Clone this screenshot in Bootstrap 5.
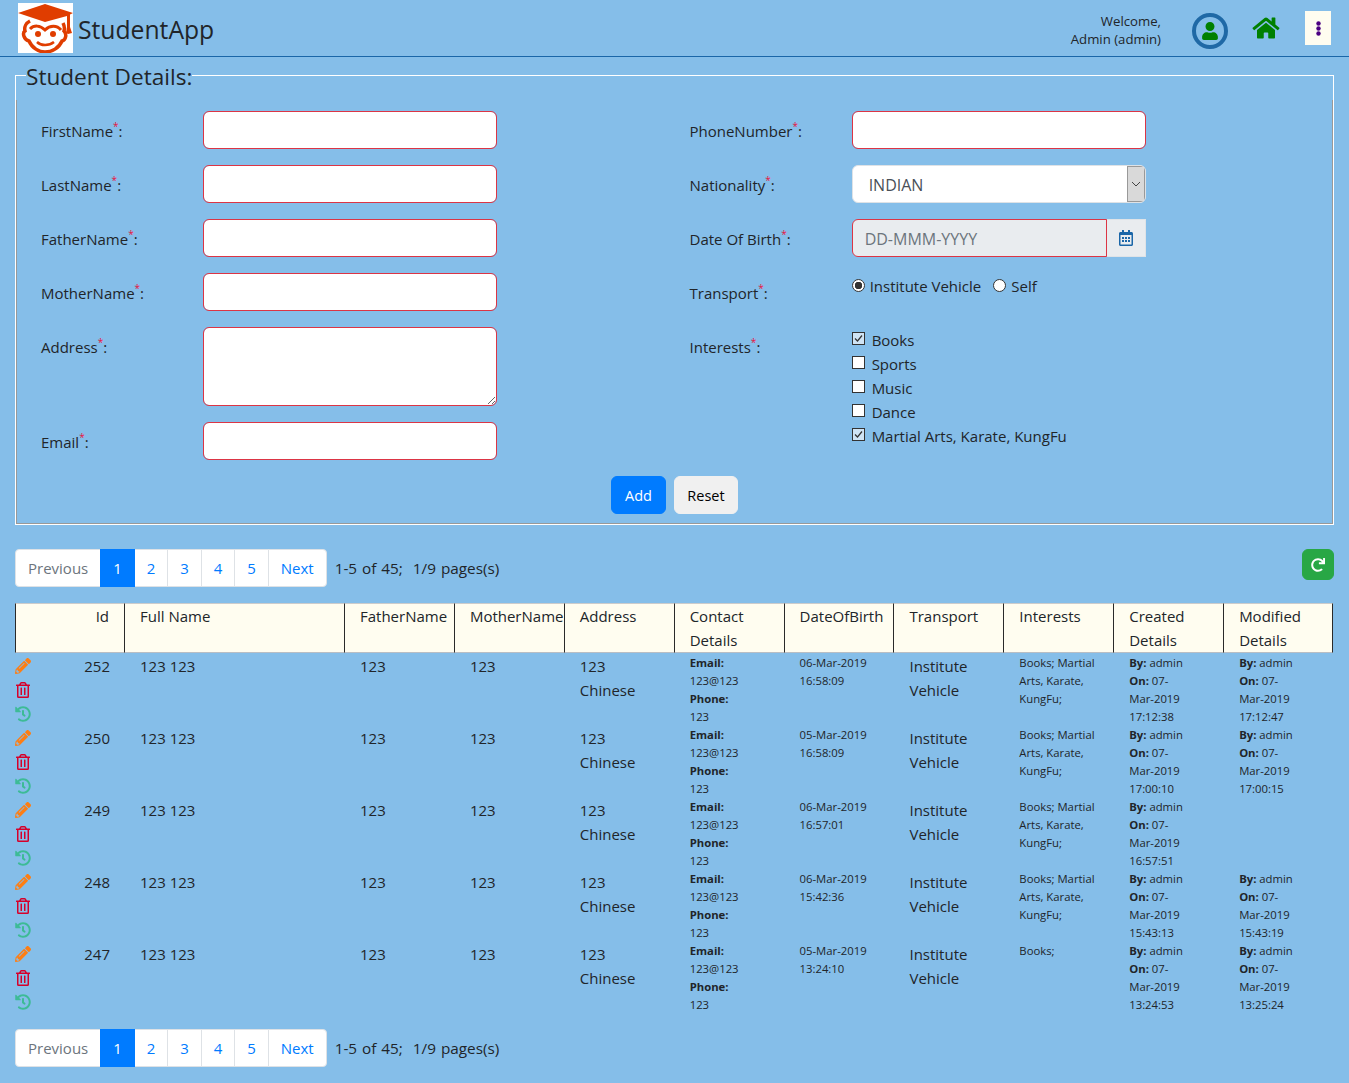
<!DOCTYPE html>
<html lang="en">
<head>
  <meta charset="UTF-8" />
  <meta name="viewport" content="width=device-width, initial-scale=1.0"/>
  <title>StudentApp</title>
  <link href="https://cdn.jsdelivr.net/npm/bootstrap@5.3.3/dist/css/bootstrap.min.css" rel="stylesheet">
  <style>
    :root { --bs-border-radius: .25rem; }
    body {
      font-family: "Open Sans", "Noto Sans", sans-serif;
      font-size: 15px;
      line-height: 24px;
      background: #85bee9;
      color: #212529;
    }
    .top-bar { height: 57px; border-bottom: 1px solid #1a66a8; padding: 3px 18px; }
    .logo-box { width: 55px; height: 50px; background: #fff; display: block; }
    .app-name { font-size: 24.7px; margin: 4px 0 0 5px; }
    .welcome { font-size: 13.2px; line-height: 18px; text-align: right; margin: 4px 31px 0 0; }
    .user-ico { width: 36px; height: 36px; border: 4px solid #1f69a6; border-radius: 50%; margin: 5px 24px 0 0; }
    .home-ico { margin-right: 25px; }
    .dots-btn { width: 26px; height: 34px; background: #fffdf0; }
    .panel-set { margin: 2px 15px 0; border: 1px solid #fff; padding: 0; min-width: 0; }
    .panel-set legend { float: none; width: auto; font-size: 22.6px; line-height: 28px; margin: -15px 0 0 10px; padding: 4px 0 0; }
    .panel-body { margin-top: 9px; padding: 11px 9px 9px; border: 1px solid #999; border-top: 0; }
    .form-cols > div { padding: 0 15px; }
    .line-row { --bs-gutter-x: 30px; margin-left: -15px; margin-right: -15px; margin-bottom: 16px; }
    .line-row > label { padding-top: 8px; }
    .line-row > div { min-height: 38px; }
    .pick-col { padding-top: 1px; }
    .req { color: #e8113c; font-size: 10px; vertical-align: 7px; line-height: 0; }
    .bad-input { height: 38px; border-color: #dc3545; }
    textarea.bad-input { height: 79px; }
    .nation-select {
      height: 38px; padding: 7px 24px 7px 16px; color: #495057;
      background-image: url("data:image/svg+xml,%3Csvg xmlns='http://www.w3.org/2000/svg' width='18' height='36'%3E%3Crect x='.5' y='.5' width='17' height='35' fill='%23d9d9d9' stroke='%23999'/%3E%3Cpath d='M5 16l4 4 4-4' fill='none' stroke='%23444'/%3E%3C/svg%3E");
      background-position: right center;
      background-size: 18px 36px;
      background-repeat: no-repeat;
    }
    .date-wrap .form-control { height: 38px; background: #e9ecef; border-color: #dc3545; padding: 8px 12px 6px; }
    .date-wrap .form-control::placeholder { color: #6c757d; }
    .date-wrap .input-group-text { width: 39px; margin-left: 0 !important; justify-content: center; padding: 0; background: #e9ecef; border-color: #dfe3e7; border-left: 0; border-radius: 0; }
    .pick-row { display: flex; align-items: center; height: 24px; }
    .pick-row input { appearance: none; width: 13px; height: 13px; margin: 0 5px 0 0; background: #fff no-repeat center; border: 1px solid #333; flex: none; position: relative; top: -1px; }
    .pick-row input[type=radio] { border-radius: 50%; }
    .pick-row input[type=radio]:checked { background-image: radial-gradient(circle, #333 0 3.5px, transparent 4px); }
    .pick-row input[type=checkbox] { margin-right: 7px; top: -2px; }
    .pick-row input[type=checkbox]:checked {
      background-color: #cfe4f5;
      background-image: url("data:image/svg+xml,%3Csvg xmlns='http://www.w3.org/2000/svg' width='11' height='11'%3E%3Cpath d='M2 5.5l2.5 2.5L9 2.5' fill='none' stroke='%23333' stroke-width='1.2'/%3E%3C/svg%3E");
    }
    .radio-pair { column-gap: 12px; }
    .btn-add, .btn-clear { height: 38px; padding: 1px 0 0; font-size: 14.5px; }
    .btn-add { width: 55px; background: #007bff; border-color: #007bff; }
    .btn-clear { width: 64px; background: #f0f0f0; border-color: #f0f0f0; }
    .pager-top { margin: 24px 15px 16px; height: 38px; }
    .pager-end { margin: 16px 15px 0; height: 38px; }
    .pagination { --bs-pagination-padding-x: 12px; --bs-pagination-padding-y: 6px; --bs-pagination-font-size: 15px; --bs-pagination-color: #007bff; --bs-pagination-active-bg: #007bff; --bs-pagination-active-border-color: #007bff; --bs-pagination-disabled-color: #6c757d; --bs-pagination-disabled-bg: #fff; }
    .page-num .page-link { width: 34.5px; padding-left: 0; padding-right: 0; text-align: center; }
    .pager-info { margin-left: 8px; white-space: pre; font-size: 15.3px; word-spacing: 1px; }
    .btn-refresh { width: 32px; height: 31px; padding: 0; background: #28a745; border-color: #28a745; display: flex; align-items: center; justify-content: center; }
    .grid-wrap { padding: 0 15px; }
    .student-grid { table-layout: fixed; width: 1318.1px; border-collapse: separate; border-spacing: 0; }
    .student-grid th { width: 109.9px; height: 50px; vertical-align: top; background: #fffdf0; font-weight: 400; padding: 0 15px; border-top: 1px solid #ccc; border-bottom: 1px solid #b9bec4; border-left: 1px solid #2a2a2a; }
    .student-grid th:nth-child(1) { width: 109px; }
    .student-grid th:nth-child(2) { width: 220px; }
    .student-grid th:last-child { border-right: 1px solid #2a2a2a; }
    .student-grid td { height: 72px; vertical-align: top; padding: 0 15px 0 16px; }
    .student-grid td.ico-cell { padding: 0 14px 0 0; }
    .cell-txt { margin: 1px 0 -1px; }
    .ico-stack > div { display: flex; height: 24px; align-items: center; }
    .small-txt { font-size: 11.3px; line-height: 18px; }
    .small-txt b { font-weight: 700; }
    .ico-pen { width: 16px; height: 16px; fill: #fd7e14; }
    .ico-bin { width: 14px; height: 16px; fill: #d6002a; margin-left: 1px; }
    .ico-his { width: 16px; height: 16px; fill: #3dbb96; }
  </style>
</head>
<body>

<!-- Header -->
<div class="top-bar d-flex align-items-center">
  <svg class="logo-box" viewBox="0 0 55 50" aria-label="Logo">
    <path d="M27 1 L55 10 L52 11.5 L52 24 L54 30 L50 31 L48 30 L49 24 L49 13 L27 19 L0 10 Z" fill="#e03d00"/>
    <path d="M12 18 C8 20 6 24 7 28 C4 30 6 37 11 38 C14 45 21 49 27 49 C34 49 41 45 44 38 C48 37 49 31 46 28 C47 25 46 22 45 20" fill="none" stroke="#e03d00" stroke-width="3.5"/>
    <path d="M12 26 C16 22 22 22 27 27 C32 22 39 22 43 27" fill="none" stroke="#e03d00" stroke-width="3"/>
    <circle cx="20" cy="31" r="3" fill="#e03d00"/><circle cx="35" cy="31" r="3" fill="#e03d00"/>
    <path d="M19 39 C23 43 31 43 36 39" fill="none" stroke="#e03d00" stroke-width="2.5"/>
  </svg>
  <span class="app-name">StudentApp</span>
  <div class="ms-auto welcome">Welcome,<br>Admin (admin)</div>
  <div class="user-ico d-flex align-items-center justify-content-center">
    <svg width="16" height="18" viewBox="0 0 448 512" fill="#008000"><path d="M224 256c70.7 0 128-57.3 128-128S294.7 0 224 0 96 57.3 96 128s57.3 128 128 128zm89.6 32h-16.7c-22.2 10.2-46.9 16-72.9 16s-50.6-5.8-72.9-16h-16.7C60.2 288 0 348.2 0 422.4V464c0 26.5 21.5 48 48 48h352c26.5 0 48-21.5 48-48v-41.6c0-74.2-60.2-134.4-134.4-134.4z"/></svg>
  </div>
  <svg class="home-ico" width="28" height="24" viewBox="0 0 576 512" fill="#008000"><path d="M280.37 148.26L96 300.11V464a16 16 0 0 0 16 16l112.06-.29a16 16 0 0 0 15.92-16V368a16 16 0 0 1 16-16h64a16 16 0 0 1 16 16v95.64a16 16 0 0 0 16 16.05L464 480a16 16 0 0 0 16-16V300L295.67 148.26a12.19 12.19 0 0 0-15.3 0zM571.6 251.47L488 182.56V44.05a12 12 0 0 0-12-12h-56a12 12 0 0 0-12 12v72.61L318.47 43a48 48 0 0 0-61 0L4.34 251.47a12 12 0 0 0-1.6 16.9l25.5 31A12 12 0 0 0 45.15 301l235.22-193.74a12.19 12.19 0 0 1 15.3 0L530.9 301a12 12 0 0 0 16.9-1.6l25.5-31a12 12 0 0 0-1.7-16.93z"/></svg>
  <div class="dots-btn d-flex align-items-center justify-content-center">
    <svg width="5" height="15" viewBox="0 0 5 15" fill="#4b0082"><circle cx="2.5" cy="2.5" r="2.2"/><circle cx="2.5" cy="7.5" r="2.2"/><circle cx="2.5" cy="12.5" r="2.2"/></svg>
  </div>
</div>

<!-- Form -->
<fieldset class="panel-set">
  <legend>Student Details:</legend>
  <div class="panel-body">
    <div class="row g-0 form-cols">
      <div class="col-6">
        <div class="row line-row"><label class="col-3">FirstName<span class="req">*</span>:</label><div class="col-6"><input class="form-control bad-input" type="text"></div></div>
        <div class="row line-row"><label class="col-3">LastName<span class="req">*</span>:</label><div class="col-6"><input class="form-control bad-input" type="text"></div></div>
        <div class="row line-row"><label class="col-3">FatherName<span class="req">*</span>:</label><div class="col-6"><input class="form-control bad-input" type="text"></div></div>
        <div class="row line-row"><label class="col-3">MotherName<span class="req">*</span>:</label><div class="col-6"><input class="form-control bad-input" type="text"></div></div>
        <div class="row line-row"><label class="col-3">Address<span class="req">*</span>:</label><div class="col-6"><textarea class="form-control bad-input"></textarea></div></div>
        <div class="row line-row"><label class="col-3">Email<span class="req">*</span>:</label><div class="col-6"><input class="form-control bad-input" type="text"></div></div>
      </div>
      <div class="col-6">
        <div class="row line-row"><label class="col-3">PhoneNumber<span class="req">*</span>:</label><div class="col-6"><input class="form-control bad-input" type="text"></div></div>
        <div class="row line-row"><label class="col-3">Nationality<span class="req">*</span>:</label><div class="col-6"><select class="form-select nation-select"><option>INDIAN</option><option>Chinese</option></select></div></div>
        <div class="row line-row"><label class="col-3">Date Of Birth<span class="req">*</span>:</label><div class="col-6"><div class="input-group date-wrap"><input class="form-control" type="text" placeholder="DD-MMM-YYYY" readonly><span class="input-group-text">
          <svg width="14" height="16" viewBox="0 0 448 512" fill="#1a66a8"><path d="M148 288h-40c-6.6 0-12-5.4-12-12v-40c0-6.6 5.4-12 12-12h40c6.6 0 12 5.4 12 12v40c0 6.6-5.4 12-12 12zm108-12v-40c0-6.6-5.4-12-12-12h-40c-6.6 0-12 5.4-12 12v40c0 6.6 5.4 12 12 12h40c6.6 0 12-5.4 12-12zm96 0v-40c0-6.6-5.4-12-12-12h-40c-6.6 0-12 5.4-12 12v40c0 6.6 5.4 12 12 12h40c6.6 0 12-5.4 12-12zm-96 96v-40c0-6.6-5.4-12-12-12h-40c-6.6 0-12 5.4-12 12v40c0 6.6 5.4 12 12 12h40c6.6 0 12-5.4 12-12zm-96 0v-40c0-6.6-5.4-12-12-12h-40c-6.6 0-12 5.4-12 12v40c0 6.6 5.4 12 12 12h40c6.6 0 12-5.4 12-12zm192 0v-40c0-6.6-5.4-12-12-12h-40c-6.6 0-12 5.4-12 12v40c0 6.6 5.4 12 12 12h40c6.6 0 12-5.4 12-12zm96-260v352c0 26.5-21.5 48-48 48H48c-26.5 0-48-21.5-48-48V112c0-26.5 21.5-48 48-48h48V12c0-6.6 5.4-12 12-12h40c6.6 0 12 5.4 12 12v52h128V12c0-6.6 5.4-12 12-12h40c6.6 0 12 5.4 12 12v52h48c26.5 0 48 21.5 48 48zm-48 346V160H48v298c0 3.3 2.7 6 6 6h340c3.3 0 6-2.7 6-6z"/></svg>
        </span></div></div></div>
        <div class="row line-row"><label class="col-3">Transport<span class="req">*</span>:</label><div class="col-6 pick-col"><div class="d-flex radio-pair"><label class="pick-row"><input type="radio" name="transport" checked>Institute Vehicle</label><label class="pick-row"><input type="radio" name="transport">Self</label></div></div></div>
        <div class="row line-row"><label class="col-3">Interests<span class="req">*</span>:</label><div class="col-6 pick-col">
          <label class="pick-row"><input type="checkbox" checked>Books</label>
          <label class="pick-row"><input type="checkbox">Sports</label>
          <label class="pick-row"><input type="checkbox">Music</label>
          <label class="pick-row"><input type="checkbox">Dance</label>
          <label class="pick-row text-nowrap"><input type="checkbox" checked>Martial Arts, Karate, KungFu</label>
        </div></div>
      </div>
    </div>
    <div class="d-flex justify-content-center gap-2">
      <button class="btn btn-primary btn-add" type="button">Add</button>
      <button class="btn btn-light btn-clear" type="button">Reset</button>
    </div>
  </div>
</fieldset>

<!-- Paging -->
<div class="d-flex align-items-center pager-top">
  <ul class="pagination mb-0" id="pager1">
    <li class="page-item disabled"><a class="page-link" href="#">Previous</a></li>
    <li class="page-item page-num active"><a class="page-link" href="#">1</a></li>
    <li class="page-item page-num"><a class="page-link" href="#">2</a></li>
    <li class="page-item page-num"><a class="page-link" href="#">3</a></li>
    <li class="page-item page-num"><a class="page-link" href="#">4</a></li>
    <li class="page-item page-num"><a class="page-link" href="#">5</a></li>
    <li class="page-item"><a class="page-link" href="#">Next</a></li>
  </ul>
  <span class="pager-info">1-5 of 45;  1/9 pages(s)</span>
  <button class="btn btn-success btn-refresh ms-auto align-self-start" type="button">
    <svg width="14" height="14" viewBox="0 0 512 512" fill="#fff"><path d="M500.33 0h-47.41a12 12 0 0 0-12 12.57l4 82.76A247.42 247.42 0 0 0 256 8C119.34 8 7.9 119.53 8 256.19 8.1 393.07 119.1 504 256 504a247.1 247.1 0 0 0 166.18-63.91 12 12 0 0 0 .48-17.43l-34-34a12 12 0 0 0-16.38-.55A176 176 0 1 1 402.1 157.8l-101.53-4.87a12 12 0 0 0-12.57 12v47.41a12 12 0 0 0 12 12h200.33a12 12 0 0 0 12-12V12a12 12 0 0 0-12-12z"/></svg>
  </button>
</div>

<div class="grid-wrap">
  <table class="student-grid">
    <thead>
      <tr><th class="text-end">Id</th><th>Full Name</th><th>FatherName</th><th class="text-nowrap">MotherName</th><th>Address</th><th>Contact Details</th><th>DateOfBirth</th><th>Transport</th><th>Interests</th><th>Created Details</th><th>Modified Details</th></tr>
    </thead>
    <tbody id="rows"></tbody>
  </table>
</div>

<div class="d-flex align-items-center pager-end">
  <ul class="pagination mb-0" id="pager2"></ul>
  <span class="pager-info">1-5 of 45;  1/9 pages(s)</span>
</div>

<script>
const pen = '<svg class="ico-pen" viewBox="0 0 512 512"><path d="M497.9 142.1l-46.1 46.1c-4.7 4.7-12.3 4.7-17 0l-111-111c-4.7-4.7-4.7-12.3 0-17l46.1-46.1c18.7-18.7 49.1-18.7 67.9 0l60.1 60.1c18.8 18.7 18.8 49.1 0 67.9zM284.2 99.8L21.6 362.4.4 483.9c-2.9 16.4 11.4 30.6 27.8 27.8l121.5-21.3 262.6-262.6c4.7-4.7 4.7-12.3 0-17l-111-111c-4.8-4.7-12.4-4.7-17.1 0zM124.1 339.9c-5.5-5.5-5.5-14.3 0-19.8l154-154c5.5-5.5 14.3-5.5 19.8 0s5.5 14.3 0 19.8l-154 154c-5.5 5.5-14.3 5.5-19.8 0zM88 424h48v36.3l-64.5 11.3-31.1-31.1L51.7 376H88v48z"/></svg>';
const bin = '<svg class="ico-bin" viewBox="0 0 448 512"><path d="M268 416h24a12 12 0 0 0 12-12V188a12 12 0 0 0-12-12h-24a12 12 0 0 0-12 12v216a12 12 0 0 0 12 12zM432 80h-82.41l-34-56.7A48 48 0 0 0 274.41 0H173.59a48 48 0 0 0-41.16 23.3L98.41 80H16A16 16 0 0 0 0 96v16a16 16 0 0 0 16 16h16v336a48 48 0 0 0 48 48h288a48 48 0 0 0 48-48V128h16a16 16 0 0 0 16-16V96a16 16 0 0 0-16-16zM171.84 50.91A6 6 0 0 1 177 48h94a6 6 0 0 1 5.15 2.91L293.61 80H154.39zM368 464H80V128h288zm-212-48h24a12 12 0 0 0 12-12V188a12 12 0 0 0-12-12h-24a12 12 0 0 0-12 12v216a12 12 0 0 0 12 12z"/></svg>';
const his = '<svg class="ico-his" viewBox="0 0 512 512"><path d="M504 255.531c.253 136.64-111.18 248.372-247.82 248.468-59.015.042-113.223-20.53-155.822-54.911-11.077-8.94-11.905-25.541-1.839-35.607l11.267-11.267c8.609-8.609 22.353-9.551 31.891-1.984C173.062 425.135 212.781 440 256 440c101.705 0 184-82.311 184-184 0-101.705-82.311-184-184-184-48.814 0-93.149 18.969-126.068 49.932l50.754 50.754c10.08 10.08 2.941 27.314-11.313 27.314H24c-8.837 0-16-7.163-16-16V38.627c0-14.254 17.234-21.393 27.314-11.314l49.372 49.372C129.209 34.136 189.552 8 256 8c136.81 0 247.747 110.78 248 247.531zm-180.912 78.784l9.823-12.63c8.138-10.463 6.253-25.542-4.21-33.679L288 256.349V152c0-13.255-10.745-24-24-24h-16c-13.255 0-24 10.745-24 24v135.651l65.409 50.874c10.463 8.137 25.541 6.253 33.679-4.21z"/></svg>';

const students = [
  { id: 252, dob: ['06-Mar-2019', '16:58:09'], interests: 'Books; Martial Arts, Karate, KungFu;', created: ['07-', 'Mar-2019', '17:12:38'], modified: ['07-', 'Mar-2019', '17:12:47'] },
  { id: 250, dob: ['05-Mar-2019', '16:58:09'], interests: 'Books; Martial Arts, Karate, KungFu;', created: ['07-', 'Mar-2019', '17:00:10'], modified: ['07-', 'Mar-2019', '17:00:15'] },
  { id: 249, dob: ['06-Mar-2019', '16:57:01'], interests: 'Books; Martial Arts, Karate, KungFu;', created: ['07-', 'Mar-2019', '16:57:51'], modified: null },
  { id: 248, dob: ['06-Mar-2019', '15:42:36'], interests: 'Books; Martial Arts, Karate, KungFu;', created: ['07-', 'Mar-2019', '15:43:13'], modified: ['07-', 'Mar-2019', '15:43:19'] },
  { id: 247, dob: ['05-Mar-2019', '13:24:10'], interests: 'Books;', created: ['07-', 'Mar-2019', '13:24:53'], modified: ['07-', 'Mar-2019', '13:25:24'] },
];

function stamp(d) {
  if (!d) return '';
  return `<b>By:</b> admin<br><b>On:</b> ${d[0]}<br>${d[1]}<br>${d[2]}`;
}

// every cell's text sits 1px under the row top without making the row taller
const cell = (html, cls = '') => `<td class="${cls}"><div class="cell-txt">${html}</div></td>`;

document.getElementById('rows').innerHTML = students.map(s => `
  <tr>
    ${cell(`<div class="d-flex justify-content-between"><div class="ico-stack"><div>${pen}</div><div>${bin}</div><div>${his}</div></div><span>${s.id}</span></div>`, 'ico-cell')}
    ${cell('123 123')}${cell('123')}${cell('123')}
    ${cell('123<br>Chinese')}
    ${cell('<b>Email:</b><br>123@123<br><b>Phone:</b><br>123', 'small-txt')}
    ${cell(`${s.dob[0]}<br>${s.dob[1]}`, 'small-txt')}
    ${cell('Institute<br>Vehicle')}
    ${cell(s.interests, 'small-txt')}
    ${cell(stamp(s.created), 'small-txt')}
    ${cell(stamp(s.modified), 'small-txt')}
  </tr>`).join('');

// second pager is the same as the first
document.getElementById('pager2').innerHTML = document.getElementById('pager1').innerHTML;
</script>

</body>
</html>
